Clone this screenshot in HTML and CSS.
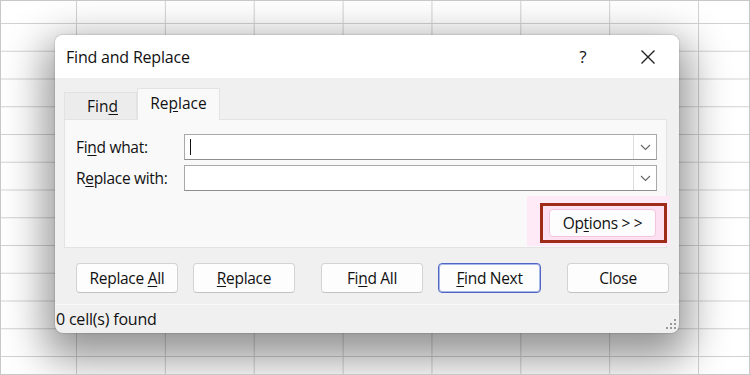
FILE: index.html
```html
<!DOCTYPE html>
<html lang="en">
<head>
    <meta charset="UTF-8">
    <meta name="viewport" content="width=device-width, initial-scale=1.0">
    <title>Find and Replace</title>
    <link rel="stylesheet" href="styles.css">
</head>
<body>
    <div class="sheet">
        <div class="dialog">
            <!-- title bar -->
            <div class="titlebar">
                <span class="title">Find and Replace</span>
                <span class="tb-help">?</span>
                <span class="tb-close">
                    <svg width="16" height="16" viewBox="0 0 16 16"><path d="M1.5 1.5 L14.5 14.5 M14.5 1.5 L1.5 14.5" stroke="#222" stroke-width="1.4" fill="none"/></svg>
                </span>
            </div>

            <div class="dialog-body">
                <div class="tabs">
                    <div class="tab">Fin<u>d</u></div>
                    <div class="tab active">Re<u>p</u>lace</div>
                </div>

                <div class="panel">
                    <div class="field-row">
                        <label>Fi<u>n</u>d what:</label>
                        <div class="combo">
                            <div class="combo-text"><span class="caret"></span></div>
                            <div class="combo-drop">
                                <svg width="11" height="7" viewBox="0 0 11 7"><path d="M1 1 L5.5 5.5 L10 1" stroke="#666" stroke-width="1.1" fill="none"/></svg>
                            </div>
                        </div>
                    </div>
                    <div class="field-row">
                        <label>R<u>e</u>place with:</label>
                        <div class="combo">
                            <div class="combo-text"></div>
                            <div class="combo-drop">
                                <svg width="11" height="7" viewBox="0 0 11 7"><path d="M1 1 L5.5 5.5 L10 1" stroke="#666" stroke-width="1.1" fill="none"/></svg>
                            </div>
                        </div>
                    </div>

                    <div class="options-row">
                        <div class="highlight">
                            <div class="red-box">
                                <button class="btn btn-options">Op<u>t</u>ions &gt; &gt;</button>
                            </div>
                        </div>
                    </div>
                </div>

                <div class="actions">
                    <div class="group">
                        <button class="btn">Replace <u>A</u>ll</button>
                        <button class="btn"><u>R</u>eplace</button>
                    </div>
                    <div class="group">
                        <button class="btn">Fi<u>n</u>d All</button>
                        <button class="btn btn-default"><u>F</u>ind Next</button>
                    </div>
                    <button class="btn">Close</button>
                </div>
            </div>

            <div class="statusbar">
                <span>0 cell(s) found</span>
                <svg class="grip" width="10" height="10" viewBox="0 0 10 10" fill="#9a9a9a">
                    <rect x="8" y="0" width="2" height="2"/>
                    <rect x="4" y="4" width="2" height="2"/><rect x="8" y="4" width="2" height="2"/>
                    <rect x="0" y="8" width="2" height="2"/><rect x="4" y="8" width="2" height="2"/><rect x="8" y="8" width="2" height="2"/>
                </svg>
            </div>
        </div>
    </div>
</body>
</html>
```

FILE: styles.css
```css
* { margin: 0; padding: 0; box-sizing: border-box; }

body {
    font-family: 'Open Sans', 'Noto Sans', sans-serif;
    color: #111;
    background: #fff;
}

.sheet {
    width: 750px;
    height: 375px;
    border: 1px solid #c8c8c8;
    padding: 34px 0 0 54px;
    overflow: hidden;
    background-color: #fff;
    background-image:
        linear-gradient(to right, #d2d2d2 1px, transparent 1px),
        linear-gradient(to bottom, #d2d2d2 1px, transparent 1px);
    background-size: 88.86px 27.75px;
    background-position: 75px 22px;
}

.dialog {
    width: 624px;
    height: 298px;
    border-radius: 8px;
    background: #f0f0f0;
    overflow: hidden;
    display: flex;
    flex-direction: column;
    box-shadow: 0 0 2px rgba(0,0,0,0.3), 0 16px 42px 10px rgba(0,0,0,0.42);
}

/* title bar */
.titlebar {
    height: 43px;
    background: #fff;
    display: flex;
    align-items: center;
    padding-left: 11px;
}

.title {
    font-size: 16px;
    font-weight: 500;
    flex: 1;
    letter-spacing: -0.2px;
}

.tb-help {
    font-size: 17px;
    font-weight: 500;
    width: 20px;
    text-align: center;
    margin-right: 47px;
}

.tb-close {
    display: flex;
    width: 16px;
    margin-right: 23px;
}

/* body */
.dialog-body {
    padding: 10px 12px 0 9px;
}

.tabs {
    display: flex;
    align-items: flex-end;
    height: 31px;
    position: relative;
    z-index: 1;
}

.tab {
    height: 27px;
    width: 73px;
    font-size: 15.5px;
    font-weight: 500;
    display: flex;
    align-items: center;
    justify-content: center;
    background: #ececec;
    border: 1px solid #e2e2e2;
    border-bottom: none;
    padding-left: 4px;
}

.tab.active {
    height: 32px;
    width: 83px;
    margin-bottom: -1px;
    background: #f9f9f9;
    border-color: #e3e3e3;
    padding: 0 0 4px 0;
}

.panel {
    height: 129px;
    background: #f9f9f9;
    border: 1px solid #e3e3e3;
    padding: 14px 9px 0 11px;
}

.field-row {
    display: grid;
    grid-template-columns: 108px 1fr;
    align-items: center;
    margin-bottom: 5px;
}

.field-row label {
    font-size: 15.5px;
    font-weight: 500;
    letter-spacing: -0.3px;
}

.combo {
    height: 26px;
    display: flex;
    background: #fff;
    border: 1px solid #a9a9a9;
    border-bottom-color: #8e8e8e;
}

.combo-text {
    flex: 1;
    display: flex;
    align-items: center;
    padding-left: 5px;
}

.caret {
    width: 1px;
    height: 16px;
    background: #111;
}

.combo-drop {
    width: 23px;
    border-left: 1px solid #dcdcdc;
    display: flex;
    align-items: center;
    justify-content: center;
}

.options-row {
    display: flex;
    justify-content: flex-end;
    margin-top: 2px;
    margin-right: -13px;
}

.highlight {
    background: #feeaf6;
    padding: 7px 3px 3px 13px;
}

.red-box {
    border: 3px solid #9e2b17;
    padding: 3px 8px 3px 6px;
    background: #fde0f1;
}

/* buttons */
.btn {
    font-family: inherit;
    font-size: 15.5px;
    font-weight: 500;
    color: #111;
    width: 102px;
    height: 30px;
    background: #fdfdfd;
    border: 1px solid #d3d3d3;
    border-bottom-color: #c2c2c2;
    border-radius: 4px;
    letter-spacing: -0.3px;
}

.btn-options {
    width: 107px;
    height: 28px;
    border-color: #f3c6df;
}

.btn-default {
    width: 103px;
    border: 1px solid #4f66c6;
    box-shadow: inset 0 0 0 1px #a9b6e8;
}

.actions {
    display: flex;
    justify-content: space-between;
    margin-top: 15px;
    margin-right: -2px;
    padding-left: 12px;
}

.group {
    display: flex;
    gap: 15px;
}

.statusbar {
    margin-top: 11px;
    flex: 1;
    border-top: 1px solid #f9f9f9;
    display: flex;
    align-items: center;
    justify-content: space-between;
    padding: 0 3px 0 1px;
    font-size: 16px;
    font-weight: 500;
    letter-spacing: -0.2px;
}

.grip {
    align-self: flex-end;
    margin-bottom: 4px;
}

u {
    text-underline-offset: 2px;
}
```
